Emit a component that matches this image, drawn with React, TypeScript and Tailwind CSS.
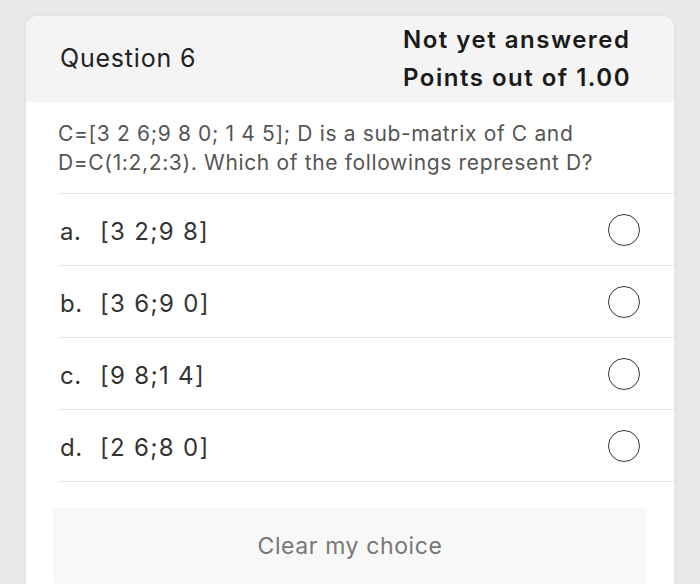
import React from 'react';

const options = [
    { letter: 'a.', text: '[3 2;9 8]' },
    { letter: 'b.', text: '[3 6;9 0]' },
    { letter: 'c.', text: '[9 8;1 4]' },
    { letter: 'd.', text: '[2 6;8 0]' },
];

const App: React.FC = () => {
    return (
        <div className="h-[584px] overflow-hidden bg-[#e9e9e9] pt-[16px] pl-[26px]" style={{ fontFamily: 'Inter, "Liberation Sans", sans-serif' }}>
            <div className="w-[648px] h-[600px] bg-white rounded-t-[12px] overflow-hidden shadow-[0_0_6px_rgba(0,0,0,0.05)]">
                {/* Header */}
                <div className="h-[86px] bg-[#f4f4f4] flex items-center justify-between pl-[34px] pr-[43px]">
                    <div className="text-[25px] text-[#222] tracking-[0.8px]">Question 6</div>
                    <div className="text-[24px] font-semibold text-[#1a1a1a] leading-[38px] tracking-[1.5px]">
                        <div>Not yet answered</div>
                        <div>Points out of 1.00</div>
                    </div>
                </div>

                {/* Body */}
                <div className="pl-[32px]">
                    <div className="pt-[17px] pb-[16px] pr-[20px] text-[21px] leading-[29px] text-[#555] tracking-[0.65px]">
                        C=[3 2 6;9 8 0; 1 4 5]; D is a sub-matrix of C and
                        <br />
                        D=C(1:2,2:3). Which of the followings represent D?
                    </div>

                    {options.map((opt) => (
                        <div key={opt.letter} className="h-[72px] border-t border-[#e6e6e6] flex items-center pr-[34px]">
                            <div className="flex-1 flex items-center text-[24px] text-[#333] pt-[4px]">
                                <span className="w-[42px] pl-[2px] tracking-[0.5px]">{opt.letter}</span>
                                <span className="tracking-[1.3px]">{opt.text}</span>
                            </div>
                            <div className="w-[32px] h-[32px] rounded-full border-[1.5px] border-[#333]" />
                        </div>
                    ))}
                    <div className="border-t border-[#e6e6e6]" />
                </div>

                {/* Clear button */}
                <div className="mt-[26px] mx-[27px] h-[76px] bg-[#f8f8f8] rounded-[4px] flex items-center justify-center text-[23px] text-[#777] tracking-[0.6px]">
                    Clear my choice
                </div>
            </div>
        </div>
    );
};

export default App;
